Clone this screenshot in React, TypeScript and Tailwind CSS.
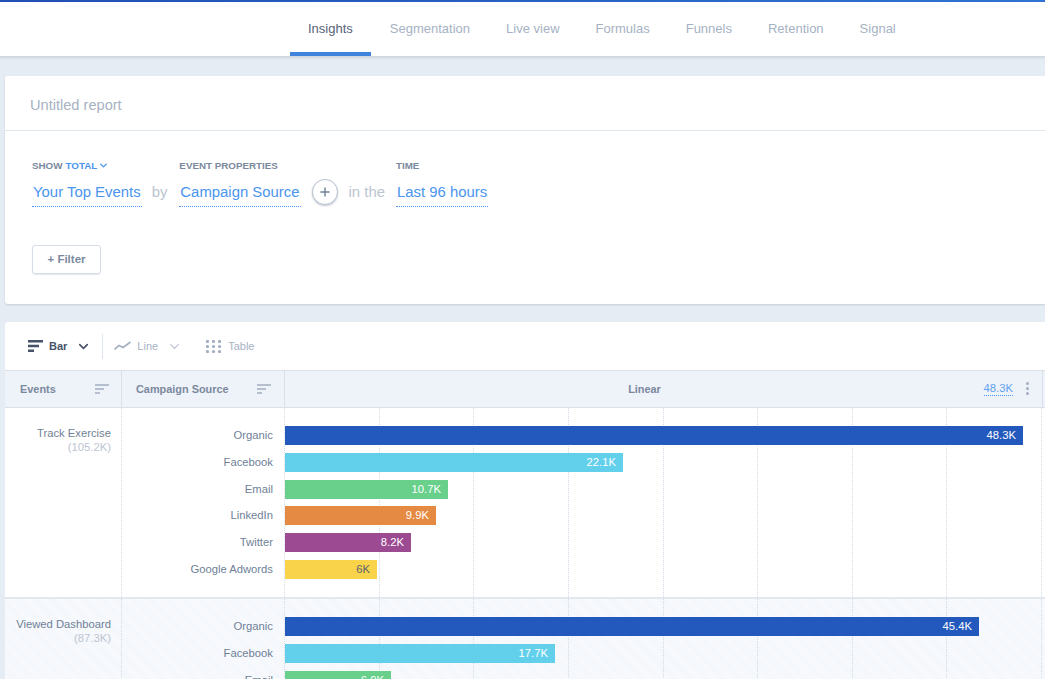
import { ChevronDown, Plus } from "lucide-react";

const tabs = ["Insights", "Segmentation", "Live view", "Formulas", "Funnels", "Retention", "Signal"];

const BLUE = "bg-[#2359bd]";
const CYAN = "bg-[#62cfeb]";
const GREEN = "bg-[#68d08b]";
const ORANGE = "bg-[#e58a42]";
const PURPLE = "bg-[#9c4b93]";
const YELLOW = "bg-[#f9d349]";

const firstRows = [
    { label: "Organic", value: "48.3K", width: 738, color: BLUE, text: "text-white" },
    { label: "Facebook", value: "22.1K", width: 338, color: CYAN, text: "text-white" },
    { label: "Email", value: "10.7K", width: 163, color: GREEN, text: "text-white" },
    { label: "LinkedIn", value: "9.9K", width: 151, color: ORANGE, text: "text-white" },
    { label: "Twitter", value: "8.2K", width: 126, color: PURPLE, text: "text-white" },
    { label: "Google Adwords", value: "6K", width: 92, color: YELLOW, text: "text-[#5d6470]" },
];

const secondRows = [
    { label: "Organic", value: "45.4K", width: 694, color: BLUE, text: "text-white" },
    { label: "Facebook", value: "17.7K", width: 270, color: CYAN, text: "text-white" },
    { label: "Email", value: "6.9K", width: 106, color: GREEN, text: "text-white" },
];

const SortIcon = () => (
    <svg width="14" height="10" viewBox="0 0 14 10" className="text-[#a3afc0]">
        <path d="M0 1h14M0 5h9M0 9h5" stroke="currentColor" strokeWidth="1.4" fill="none" />
    </svg>
);

const BarIcon = () => (
    <svg width="15" height="12" viewBox="0 0 15 12" className="text-[#46536a]">
        <path d="M0 1.2h15M0 6h11M0 10.8h6" stroke="currentColor" strokeWidth="2.4" fill="none" />
    </svg>
);

const LineIcon = () => (
    <svg width="17" height="10" viewBox="0 0 17 10" className="text-[#a3afc0]">
        <path d="M0.5 8.5 5 4.5 9 6.5 16.5 1" stroke="currentColor" strokeWidth="1.6" fill="none" />
    </svg>
);

const GridIcon = () => (
    <svg width="15" height="13" viewBox="0 0 15 13" className="text-[#a3afc0]">
        {[1.5, 6.5, 11.5].map((y) =>
            [1.5, 7.5, 13.5].map((x) => <circle key={`${x}-${y}`} cx={x} cy={y} r="1.6" fill="currentColor" />)
        )}
    </svg>
);

type Bar = { label: string; value: string; width: number; color: string; text: string };

const EventRow = ({ name, total, bars, shaded }: { name: string; total: string; bars: Bar[]; shaded?: boolean }) => (
    <div
        className={`flex h-[191px] shrink-0 border-b-2 border-[#e3e8ef] ${
            shaded
                ? "bg-[repeating-linear-gradient(45deg,#f3f6fb_0,#f3f6fb_1px,#f8fafd_1px,#f8fafd_2px)]"
                : "bg-white"
        }`}
    >
        <div className="w-[117px] shrink-0 border-r border-dotted border-[#d3dbe6] pt-[18px] pr-[10px] text-right text-[11.25px] leading-[14px]">
            <div className="text-[#6f7f97]">{name}</div>
            <div className="text-[#bcc5d2]">{total}</div>
        </div>
        <div className="w-[163px] shrink-0 border-r border-dotted border-[#d3dbe6] pt-[18px] pr-[11px] text-right text-[11.25px] text-[#6f7f97]">
            <div className="flex flex-col gap-[7.8px]">
                {bars.map((bar) => (
                    <div key={bar.label} className="h-[19px] leading-[19px]">{bar.label}</div>
                ))}
            </div>
        </div>
        <div className="relative w-[757px] shrink-0 border-r border-dotted border-[#d3dbe6] pt-[18px]">
            <div className="absolute inset-0 flex">
                {[0, 1, 2, 3, 4, 5, 6, 7].map((i) => (
                    <div key={i} className="flex-1 border-r border-dotted border-[#d3dbe6] last:border-r-0" />
                ))}
            </div>
            <div className="relative flex flex-col gap-[7.8px]">
                {bars.map((bar) => (
                    <div
                        key={bar.label}
                        className={`h-[19px] pr-[7px] text-right text-[11.25px] leading-[19px] ${bar.color} ${bar.text}`}
                        style={{ width: bar.width }}
                    >
                        {bar.value}
                    </div>
                ))}
            </div>
        </div>
    </div>
);

const App = () => {
    return (
        <div className="h-[679px] w-[1045px] overflow-hidden bg-[#e6ecf4] font-['Liberation_Sans',Arial,sans-serif]">
            <div className="h-[2px] bg-gradient-to-r from-[#1f4fb5] to-[#2f73d6]" />
            <nav className="flex h-[55px] border-b border-[#d3d9e2] bg-white pl-[290px] shadow-[0_1px_2px_rgba(120,135,160,0.25)]">
                {tabs.map((tab, i) => (
                    <div
                        key={tab}
                        className={`flex items-center border-b-[4px] px-[18px] pt-[4px] text-[13px] ${
                            i === 0 ? "border-[#3f83dc] font-medium text-[#56627a]" : "border-transparent text-[#a6b2c3]"
                        } ${i === 1 ? "ml-px" : ""}`}
                    >
                        {tab}
                    </div>
                ))}
            </nav>

            <section className="mt-[19px] ml-[5px] h-[228px] rounded-l-[3px] bg-white shadow-[0_1px_2px_rgba(120,135,160,0.3)]">
                <div className="flex h-[55px] items-center border-b border-[#dfe5ed] pt-[6px] pl-[25px] text-[14.6px] text-[#a6b2c3]">
                    Untitled report
                </div>
                <div className="flex items-start pt-[29px] pl-[27px]">
                    <div>
                        <div className="flex h-[13px] items-center text-[9.8px] font-bold text-[#7b899e]">
                            SHOW <span className="ml-[3px] text-[#4a95ef]">TOTAL</span>
                            <ChevronDown className="mb-[3px] ml-[1px] h-[11px] w-[11px] text-[#4a95ef]" strokeWidth={3} />
                        </div>
                        <div className="mt-[9px] border-b border-dotted border-[#4a95ef] px-[1px] pb-[4px] text-[14.9px] leading-[20px] text-[#4a95ef]">
                            Your Top Events
                        </div>
                    </div>
                    <span className="mt-[22px] ml-[10px] text-[14.9px] leading-[20px] text-[#bcc5d2]">by</span>
                    <div className="ml-[12px]">
                        <div className="flex h-[13px] items-center text-[9.8px] font-bold text-[#7b899e]">EVENT PROPERTIES</div>
                        <div className="mt-[9px] border-b border-dotted border-[#4a95ef] px-[1px] pb-[4px] text-[14.9px] leading-[20px] text-[#4a95ef]">
                            Campaign Source
                        </div>
                    </div>
                    <div className="mt-[19px] ml-[11px] flex h-[26px] w-[26px] items-center justify-center rounded-full border border-[#b9c3d1] bg-white shadow-[0_1px_2px_rgba(120,135,160,0.45)]">
                        <Plus className="h-[14px] w-[14px] text-[#6f7f97]" strokeWidth={2.4} />
                    </div>
                    <span className="mt-[22px] ml-[11px] text-[14.9px] leading-[20px] text-[#bcc5d2]">in the</span>
                    <div className="ml-[11px]">
                        <div className="flex h-[13px] items-center text-[9.8px] font-bold text-[#7b899e]">TIME</div>
                        <div className="mt-[9px] border-b border-dotted border-[#4a95ef] px-[1px] pb-[4px] text-[14.9px] leading-[20px] text-[#4a95ef]">
                            Last 96 hours
                        </div>
                    </div>
                </div>
                <button className="mt-[38px] ml-[27px] flex h-[29px] w-[69px] items-center justify-center rounded-[3px] border border-[#d6dce5] text-[11.5px] font-bold text-[#7b899e] shadow-[0_1px_1px_rgba(120,135,160,0.2)]">
                    + Filter
                </button>
            </section>

            <section className="mt-[18px] ml-[5px] rounded-tl-[3px] bg-white">
                <div className="flex h-[48px] items-center pl-[23px] text-[11px]">
                    <BarIcon />
                    <span className="ml-[6px] font-bold text-[#46536a]">Bar</span>
                    <ChevronDown className="ml-[9px] h-[15px] w-[15px] text-[#46536a]" strokeWidth={2.6} />
                    <div className="ml-[11px] h-[25px] w-px bg-[#dfe5ed]" />
                    <span className="ml-[11px]"><LineIcon /></span>
                    <span className="ml-[6px] text-[#a6b2c3]">Line</span>
                    <ChevronDown className="ml-[9px] h-[15px] w-[15px] text-[#bcc5d2]" strokeWidth={2} />
                    <span className="ml-[24px]"><GridIcon /></span>
                    <span className="ml-[7px] text-[#a6b2c3]">Table</span>
                </div>
                <div className="flex h-[38px] border-y border-[#d9e0ea] bg-[#eef2f9] text-[10.9px] font-bold text-[#7b899e]">
                    <div className="flex w-[117px] shrink-0 items-center justify-between border-r border-[#d9e0ea] pr-[12px] pl-[15px]">
                        Events
                        <SortIcon />
                    </div>
                    <div className="flex w-[163px] shrink-0 items-center justify-between border-r border-[#d9e0ea] pr-[13px] pl-[14px]">
                        Campaign Source
                        <SortIcon />
                    </div>
                    <div className="relative flex w-[758px] shrink-0 items-center justify-center border-r border-[#d9e0ea] pr-[38px]">
                        Linear
                        <span className="absolute top-[11px] right-[29px] border-b border-dotted border-[#4a95ef] text-[11.25px] leading-[13px] font-normal text-[#5fa3f0]">48.3K</span>
                        <span className="absolute top-[11px] right-[13px] flex flex-col gap-[2px]">
                            <i className="h-[3px] w-[3px] rounded-full bg-[#a3afc0]" />
                            <i className="h-[3px] w-[3px] rounded-full bg-[#a3afc0]" />
                            <i className="h-[3px] w-[3px] rounded-full bg-[#a3afc0]" />
                        </span>
                    </div>
                </div>
                <EventRow name="Track Exercise" total="(105.2K)" bars={firstRows} />
                <EventRow name="Viewed Dashboard" total="(87.3K)" bars={secondRows} shaded />
            </section>
        </div>
    );
};

export default App;
